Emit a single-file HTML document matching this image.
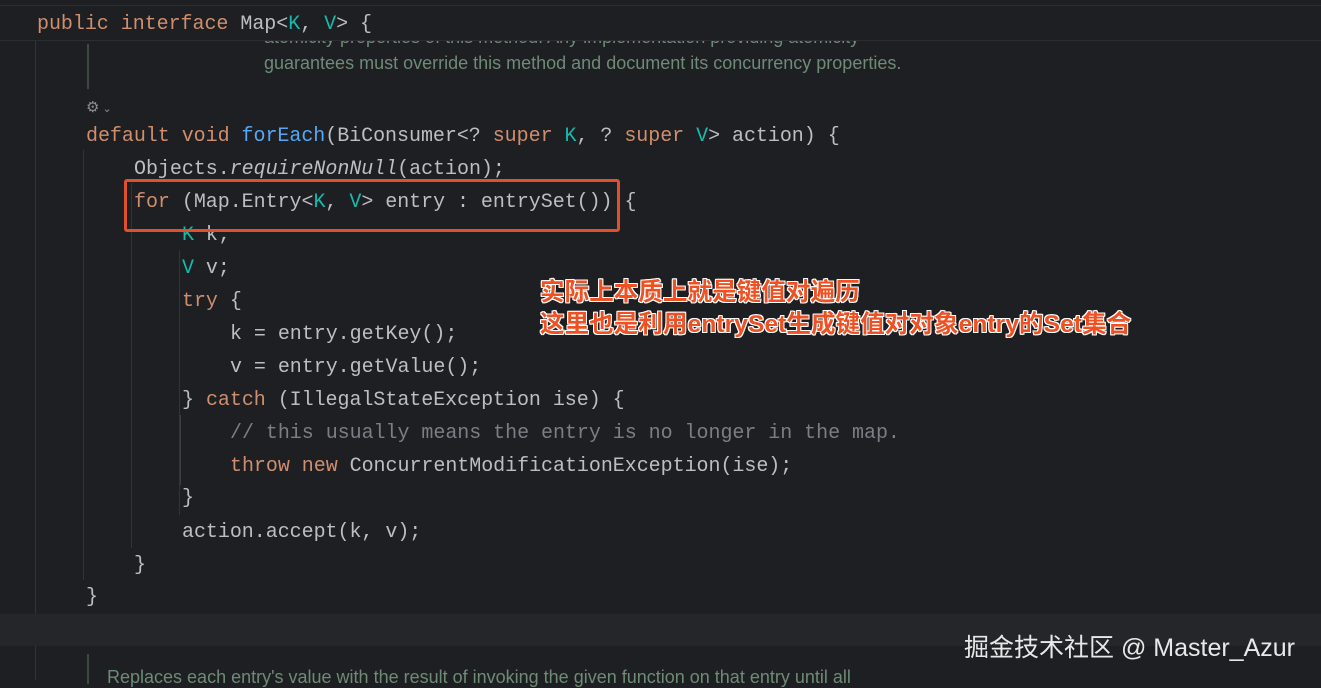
<!DOCTYPE html>
<html><head><meta charset="utf-8"><style>
body{margin:0;width:1321px;height:680px;background:#1e1f22;overflow:hidden;position:relative;font-family:"Liberation Mono",monospace;}
.l{position:absolute;left:0;font-size:20px;line-height:33px;height:33px;color:#bcbec4;white-space:pre;letter-spacing:-0.04px}
.k{color:#cf8e6d}.t{color:#16baac}.f{color:#56a8f5}.c{color:#7a7e85}.i{font-style:italic}
.g{position:absolute;width:1px;background:#313438}
.doc{position:absolute;left:264px;font-family:"Liberation Sans",sans-serif;font-size:18px;color:#6f8a76;white-space:pre}
.ann{position:absolute;left:540px;font-family:"Liberation Sans","Noto Sans CJK SC",sans-serif;font-weight:bold;font-size:24.5px;color:#ee5224;white-space:pre;text-shadow:1px 1px 0 #fff,-1px -1px 0 #fff,1px -1px 0 #fff,-1px 1px 0 #fff,0 1px 0 #fff,0 -1px 0 #fff,1px 0 0 #fff,-1px 0 0 #fff;letter-spacing:0.1px}
</style></head><body>
<div class="g" style="left:35px;top:41px;height:639px"></div>
<div class="g" style="left:83px;top:150px;height:430px"></div>
<div class="g" style="left:131px;top:183px;height:365px"></div>
<div class="g" style="left:179px;top:250px;height:265px"></div>
<div class="g" style="left:180px;top:415px;height:70px;background:#3a3d41"></div>
<div style="position:absolute;left:87px;top:44px;width:2px;height:45px;background:#3d4a40"></div>
<div style="position:absolute;left:87px;top:654px;width:2px;height:30px;background:#3d4a40"></div>
<div style="position:absolute;left:0;top:614px;width:1321px;height:32px;background:#25262a"></div>
<div class="doc" style="top:27px">atomicity properties of this method. Any implementation providing atomicity</div>
<div class="doc" style="top:53px">guarantees must override this method and document its concurrency properties.</div>
<div class="doc" style="top:667px;left:107px">Replaces each entry's value with the result of invoking the given function on that entry until all</div>
<div style="position:absolute;left:0;top:0;width:1321px;height:40px;background:#1e1f22;border-bottom:1px solid #2b2d30"></div>
<div style="position:absolute;left:0;top:5px;width:1321px;height:1px;background:#2b2d30"></div>
<div class="l" style="top:8px;left:37px"><span class="k">public interface</span> Map&lt;<span class="t">K</span>, <span class="t">V</span>&gt; {</div>
<div style="position:absolute;left:86px;top:98px;color:#8a8d92;font-size:15px;font-family:'DejaVu Sans',sans-serif">⚙<span style="font-size:11px;margin-left:3px">⌄</span></div>
<div class="l" style="top:120px;left:86px"><span class="k">default void</span> <span class="f">forEach</span>(BiConsumer&lt;? <span class="k">super</span> <span class="t">K</span>, ? <span class="k">super</span> <span class="t">V</span>&gt; action) {</div>
<div class="l" style="top:153px;left:134px">Objects.<span class="i">requireNonNull</span>(action);</div>
<div class="l" style="top:186px;left:134px"><span class="k">for</span> (Map.Entry&lt;<span class="t">K</span>, <span class="t">V</span>&gt; entry : entrySet()) {</div>
<div class="l" style="top:219px;left:182px"><span class="t">K</span> k;</div>
<div class="l" style="top:252px;left:182px"><span class="t">V</span> v;</div>
<div class="l" style="top:285px;left:182px"><span class="k">try</span> {</div>
<div class="l" style="top:318px;left:230px">k = entry.getKey();</div>
<div class="l" style="top:351px;left:230px">v = entry.getValue();</div>
<div class="l" style="top:384px;left:182px">} <span class="k">catch</span> (IllegalStateException ise) {</div>
<div class="l c" style="top:417px;left:230px">// this usually means the entry is no longer in the map.</div>
<div class="l" style="top:450px;left:230px"><span class="k">throw new</span> ConcurrentModificationException(ise);</div>
<div class="l" style="top:482px;left:182px">}</div>
<div class="l" style="top:516px;left:182px">action.accept(k, v);</div>
<div class="l" style="top:549px;left:134px">}</div>
<div class="l" style="top:581px;left:86px">}</div>
<div style="position:absolute;left:124px;top:179px;width:490px;height:47px;border:3px solid #e0502c;border-radius:3px"></div>
<div class="ann" style="top:273px">实际上本质上就是键值对遍历</div>
<div class="ann" style="top:305px">这里也是利用entrySet生成键值对对象entry的Set集合</div>
<div style="position:absolute;left:964px;top:628px;font-family:'Liberation Sans','Noto Sans CJK SC',sans-serif;font-size:25px;color:#e8e8e8;white-space:pre">掘金技术社区 @ Master_Azur</div>
</body></html>
